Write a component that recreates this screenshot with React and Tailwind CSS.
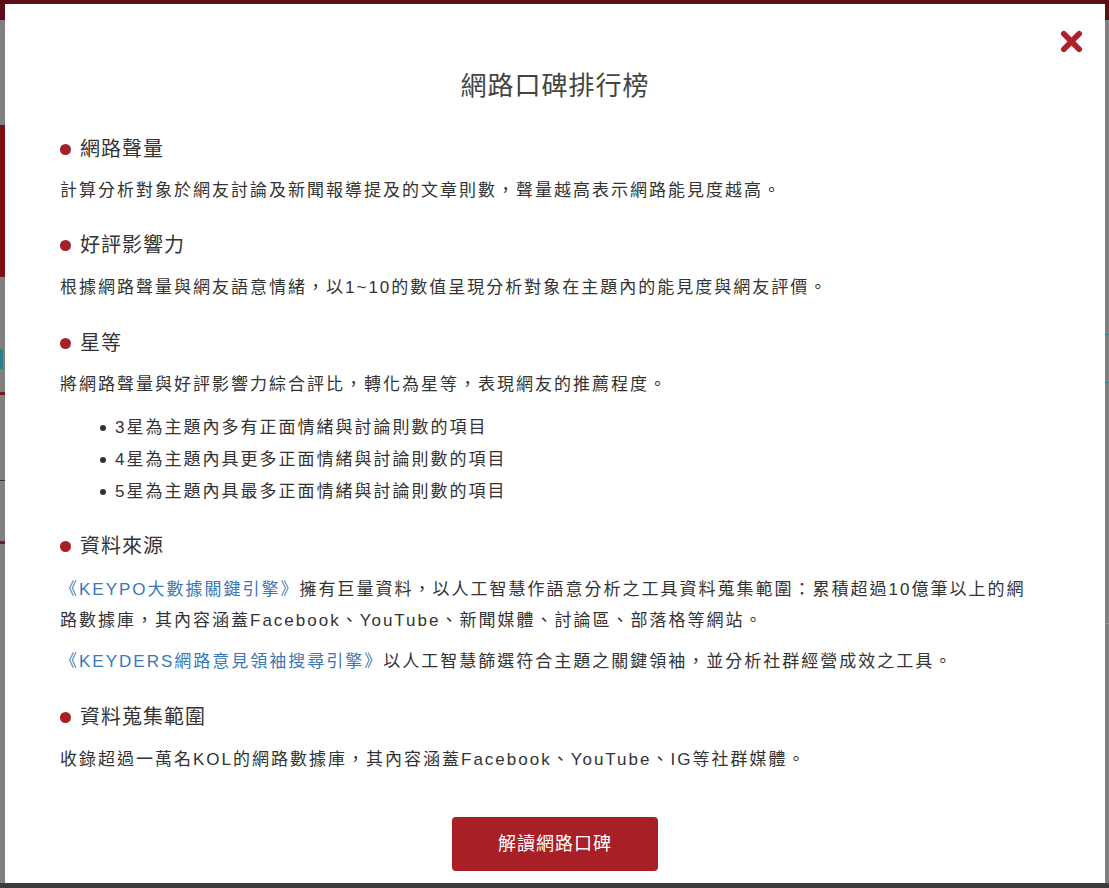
import React from "react"

const font = { fontFamily: '"Liberation Sans", "Noto Sans CJK TC", sans-serif' }

function Heading({ children, className = "mt-[25px]" }) {
  return (
    <div className={"flex items-center h-[30px] " + className}>
      <span className="w-[11px] h-[11px] rounded-full bg-[#a81f26] mr-[9px]" />
      <h3 className="text-[20px] leading-[30px] tracking-[1px] text-[#333] font-normal">
        {children}
      </h3>
    </div>
  )
}

function Para({ children, className = "mt-[11px]" }) {
  return (
    <p className={"text-[17px] leading-[31px] tracking-[2px] text-[#333] " + className}>
      {children}
    </p>
  )
}

const stars = [
  "3星為主題內多有正面情緒與討論則數的項目",
  "4星為主題內具更多正面情緒與討論則數的項目",
  "5星為主題內具最多正面情緒與討論則數的項目",
]

export default function App() {
  return (
    <div className="w-[1109px] h-[888px] bg-[#808080] flex flex-col overflow-hidden" style={font}>

      {/* page behind the overlay */}
      <div className="h-[4px] bg-[#5b1017]" />

      <div className="flex flex-1 min-h-0">

        <div className="w-[5px] flex flex-col">
          <div className="h-[16px] bg-[#5b1017]" />
          <div className="h-[105px]" />
          <div className="h-[152px] bg-[#7c0f14]" />
          <div className="h-[72px]" />
          <div className="h-[20px] w-[3px] bg-[#2a7f8f]" />
          <div className="h-[23px]" />
          <div className="h-[3px] bg-[#6b1a1e]" />
          <div className="h-[85px]" />
          <div className="h-[1px] bg-[#333]" />
          <div className="h-[60px]" />
          <div className="h-[3px] bg-[#7a1a1f]" />
        </div>

        {/* modal */}
        <div className="w-[1100px] bg-white relative pt-[62px] px-[55px]">

          <button className="absolute top-[26px] right-[22px] w-[23px] h-[23px]">
            <svg viewBox="0 0 24 24" className="w-full h-full">
              <path d="M4 4 L20 20 M20 4 L4 20" stroke="#b0202a" strokeWidth="6" strokeLinecap="round" />
            </svg>
          </button>

          <h2 className="text-center text-[26px] leading-[40px] tracking-[1px] text-[#444] font-normal pb-[3px]">
            網路口碑排行榜
          </h2>

          <Heading>網路聲量</Heading>
          <Para>計算分析對象於網友討論及新聞報導提及的文章則數，聲量越高表示網路能見度越高。</Para>

          <Heading className="mt-[24px]">好評影響力</Heading>
          <Para className="mt-[12px]">根據網路聲量與網友語意情緒，以1~10的數值呈現分析對象在主題內的能見度與網友評價。</Para>

          <Heading>星等</Heading>
          <Para>將網路聲量與好評影響力綜合評比，轉化為星等，表現網友的推薦程度。</Para>
          <ul className="mt-[12px] pl-[40px]">
            {stars.map(s => (
              <li key={s} className="flex items-center text-[17px] leading-[32px] tracking-[2px] text-[#333]">
                <span className="w-[6px] h-[6px] rounded-full bg-[#333] mr-[9px]" />
                {s}
              </li>
            ))}
          </ul>

          <Heading className="mt-[23px]">資料來源</Heading>
          <Para className="mt-[13px]">
            <span className="text-[#3a78b5]">《KEYPO大數據關鍵引擎》</span>
            擁有巨量資料，以人工智慧作語意分析之工具資料蒐集範圍：累積超過10億筆以上的網<br />
            路數據庫，其內容涵蓋Facebook、YouTube、新聞媒體、討論區、部落格等網站。
          </Para>
          <Para className="mt-[10px]">
            <span className="text-[#3a78b5]">《KEYDERS網路意見領袖搜尋引擎》</span>
            以人工智慧篩選符合主題之關鍵領袖，並分析社群經營成效之工具。
          </Para>

          <Heading>資料蒐集範圍</Heading>
          <Para className="mt-[12px]">收錄超過一萬名KOL的網路數據庫，其內容涵蓋Facebook、YouTube、IG等社群媒體。</Para>

          <div className="flex justify-center mt-[42px]">
            <button className="w-[206px] h-[54px] rounded-[4px] bg-[#a81f26] text-white text-[18px] tracking-[1px]">
              解讀網路口碑
            </button>
          </div>
        </div>

        <div className="flex-1 flex flex-col">
          <div className="h-[16px] bg-[#5b1017]" />
          <div className="h-[314px]" />
          <div className="h-[1px] bg-[#3b7f95]" />
          <div className="h-[47px]" />
          <div className="h-[1px] bg-[#3b7f95]" />
          <div className="h-[240px]" />
          <div className="h-[1px] bg-[#999]" />
        </div>
      </div>

      <div className="h-[5px] bg-[#3c3c3c]" />
    </div>
  )
}
